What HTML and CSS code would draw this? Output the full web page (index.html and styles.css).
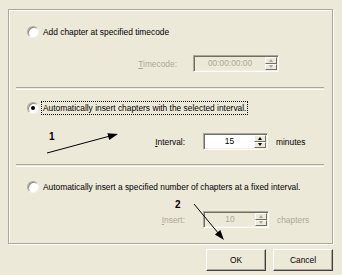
FILE: index.html
```html
<!DOCTYPE html>
<html>
<head>
    <link rel="stylesheet" href="styles.css">
</head>
<body>
    <div class="dialog">
        <!-- Chapter options -->
        <div class="group">
            <div class="radio-row r1">
                <span class="radio"></span>
                <span class="txt">Add chapter at specified timecode</span>
            </div>
            <div class="field-row f1">
                <span class="lbl off"><u>T</u>imecode:</span>
                <span class="spin off w-tc">
                    <span class="val">00:00:00:00</span>
                    <span class="arrows"><span class="up"></span><span class="dn"></span></span>
                </span>
            </div>
            <div class="sep s1"></div>

            <div class="radio-row r2">
                <span class="radio on"></span>
                <span class="txt focus">Automatically insert chapters with the selected interval.</span>
            </div>
            <div class="field-row f2">
                <span class="lbl"><u>I</u>nterval:</span>
                <span class="spin w-iv">
                    <span class="val">15</span>
                    <span class="arrows"><span class="up"></span><span class="dn"></span></span>
                </span>
                <span class="unit">minutes</span>
            </div>
            <div class="sep s2"></div>

            <div class="radio-row r3">
                <span class="radio"></span>
                <span class="txt">Automatically insert a specified number of chapters at a fixed interval.</span>
            </div>
            <div class="field-row f3">
                <span class="lbl off"><u>I</u>nsert:</span>
                <span class="spin off w-in">
                    <span class="val">10</span>
                    <span class="arrows"><span class="up"></span><span class="dn"></span></span>
                </span>
                <span class="unit off">chapters</span>
            </div>
        </div>

        <div class="buttons">
            <button class="btn">OK</button>
            <button class="btn">Cancel</button>
        </div>
    </div>

    <!-- Annotation arrows drawn over the dialog -->
    <svg class="notes" width="342" height="275" viewBox="0 0 342 275">
        <text x="49" y="140" class="num">1</text>
        <line x1="47" y1="153" x2="110" y2="136" stroke="#000" stroke-width="1"/>
        <polygon points="118,134 109.2,140 107.4,133.2" fill="#000"/>
        <text x="175" y="208" class="num">2</text>
        <line x1="194" y1="204" x2="219" y2="234" stroke="#000" stroke-width="1"/>
        <polygon points="224,240 220.3,230.1 214.9,234.5" fill="#000"/>
    </svg>
</body>
</html>
```

FILE: styles.css
```css
body {
    margin: 0;
    width: 342px;
    height: 275px;
    overflow: hidden;
    background: #ece9d8;
    font-family: 'Liberation Sans', Arial, sans-serif;
    font-size: 8.4px;
    color: #000;
    position: relative;
}
.dialog {
    padding: 9px 9px 0 8px;
}
/* Group box */
.group {
    box-sizing: border-box;
    height: 235px;
    border: 1px solid #aca899;
    box-shadow: inset 1px 1px #fff, 1px 1px #fff;
    display: flex;
    flex-direction: column;
}
.radio-row {
    display: flex;
    align-items: center;
    height: 13px;
    padding-left: 18px;
}
.r1 { margin-top: 15px; }
.r2 { margin-top: 11px; }
.r3 { margin-top: 13px; }
.radio {
    box-sizing: border-box;
    width: 12px;
    height: 12px;
    border-radius: 50%;
    border: 1px solid;
    border-color: #aca899 #f4f3ee #f4f3ee #aca899;
    background: #fff;
    box-shadow: inset 1px 1px #8c8a7e;
    margin-right: 2px;
    display: flex;
    align-items: center;
    justify-content: center;
}
.radio.on::after {
    content: '';
    width: 4px;
    height: 4px;
    border-radius: 50%;
    background: #000;
}
.txt {
    padding: 1px 1px;
    border: 1px solid transparent;
    white-space: nowrap;
}
.txt.focus {
    border: 1px dotted #000;
}
/* Field rows */
.field-row {
    display: flex;
    align-items: center;
    height: 17px;
}
.f1 { margin-top: 17px; }
.f2 { margin-top: 19px; }
.f3 { margin-top: 18px; }
.lbl {
    width: 176px;
    text-align: right;
    white-space: nowrap;
}
.f1 .lbl { width: 168px; }
.off { color: #aca899; }
.spin {
    box-sizing: border-box;
    height: 17px;
    display: flex;
    border: 1px solid;
    border-color: #aca899 #fff #fff #aca899;
    box-shadow: inset 1px 1px #716f64, inset -1px -1px #f1efe2;
    background: #fff;
    padding: 1px;
}
.spin.off { background: #ece9d8; }
.w-tc { width: 86px; margin-left: 16px; }
.w-iv { width: 65px; margin-left: 18px; }
.w-in { width: 66px; margin-left: 18px; }
.val {
    flex: 1;
    text-align: center;
    line-height: 13px;
}
.arrows {
    width: 12px;
    display: flex;
    flex-direction: column;
}
.arrows span {
    flex: 1;
    box-sizing: border-box;
    background: #ece9d8;
    border: 1px solid;
    border-color: #fff #716f64 #716f64 #fff;
    display: flex;
    align-items: center;
    justify-content: center;
}
.arrows .up::after, .arrows .dn::after {
    content: '';
    border-left: 2.5px solid transparent;
    border-right: 2.5px solid transparent;
}
.arrows .up::after { border-bottom: 3px solid #000; }
.arrows .dn::after { border-top: 3px solid #000; }
.off .arrows .up::after { border-bottom-color: #aca899; }
.off .arrows .dn::after { border-top-color: #aca899; }
.unit {
    margin-left: 8px;
}
/* Etched separators */
.sep {
    height: 1px;
    margin: 0 8px 0 7px;
    border-top: 1px solid #aca899;
    border-bottom: 1px solid #fff;
}
.s1 { margin-top: 15px; }
.s2 { margin-top: 14px; }
/* Dialog buttons */
.buttons {
    display: flex;
    justify-content: flex-end;
    gap: 7px;
    margin-top: 5px;
}
.btn {
    width: 60px;
    height: 22px;
    font-family: inherit;
    font-size: 8.4px;
    background: #ece9d8;
    border: 1px solid;
    border-color: #fff #404040 #404040 #fff;
    box-shadow: inset -1px -1px #aca899;
    padding: 0;
    color: #000;
}
.notes {
    position: absolute;
    top: 0;
    left: 0;
    pointer-events: none;
}
.num {
    font-family: 'Liberation Sans', Arial, sans-serif;
    font-size: 10px;
    font-weight: bold;
}
```
